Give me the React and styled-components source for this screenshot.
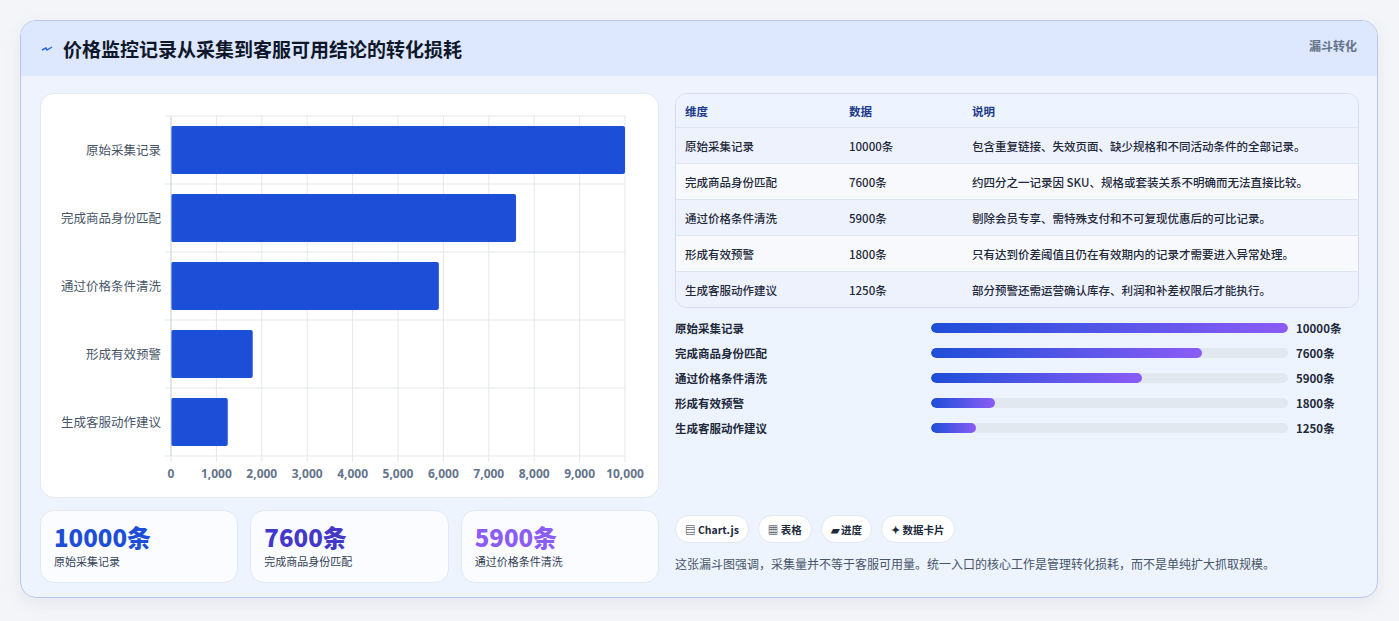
import React from "react";
import styled, { createGlobalStyle } from "styled-components";

const G = createGlobalStyle`
  html,body{margin:0;background:#f4f5f8;}
  body{font-family:"Noto Sans CJK SC","Noto Sans",sans-serif;}
`;
const Page = styled.div`padding:20px 21px 22px 20px;`;
const Card = styled.div`
  border:1px solid #b9c6ee;border-radius:16px;overflow:hidden;
  background:linear-gradient(180deg,#eef3fe,#edf4fe);
  box-shadow:0 6px 18px rgba(60,80,140,.08);height:578px;box-sizing:border-box;
`;
const Header = styled.div`
  height:55px;background:#dde7fd;display:flex;align-items:center;justify-content:space-between;
  padding:0 20px 0 20px;box-sizing:border-box;
`;
const Title = styled.h1`margin:0;font-size:19px;font-weight:700;color:#0f172a;display:flex;align-items:center;gap:10px;`;
const Tag = styled.span`font-size:12px;font-weight:700;color:#64748b;align-self:flex-start;margin-top:16px;`;
const Body = styled.div`display:grid;grid-template-columns:619px 684px;gap:16px;padding:17px 19px 0 19px;`;
const Left = styled.div`display:flex;flex-direction:column;gap:12px;`;
const ChartBox = styled.div`background:#fff;border:1px solid #e3e8f3;border-radius:14px;height:403px;`;
const Stats = styled.div`display:grid;grid-template-columns:repeat(3,1fr);gap:12px;`;
const Stat = styled.div`background:#fbfcff;border:1px solid #e3e8f3;border-radius:14px;height:73px;box-sizing:border-box;padding:10px 13px;`;
const StatNum = styled.div`font-size:24px;font-weight:800;color:${p=>p.c};line-height:32px;`;
const StatLbl = styled.div`font-size:11px;color:#334155;`;
const Right = styled.div`display:flex;flex-direction:column;height:490px;`;
const Table = styled.div`border:1px solid #d5dcee;border-radius:12px;overflow:hidden;`;
const Row = styled.div`
  display:grid;grid-template-columns:164px 123px 1fr;height:${p=>p.h?33:35}px;align-items:center;
  padding-left:9px;font-size:11.5px;color:${p=>p.h?"#1e3a8a":"#1e293b"};font-weight:${p=>p.h?700:500};
  background:${p=>p.h?"#eef4ff":p.alt?"#f7f9fd":"#eef2fc"};border-top:${p=>p.h?"none":"1px solid #dfe5f2"};
`;
const Bars = styled.div`display:flex;flex-direction:column;margin-top:8px;`;
const BarRow = styled.div`display:grid;grid-template-columns:256px 357px 1fr;align-items:center;height:24.8px;font-size:11.5px;font-weight:700;color:#1e293b;`;
const Track = styled.div`height:10px;border-radius:5px;background:#e2e8f0;overflow:hidden;`;
const Fill = styled.div`height:100%;border-radius:5px;background:linear-gradient(90deg,#1d4ed8,#8b5cf6);`;
const Val = styled.span`padding-left:8px;font-size:11.5px;`;
const Chips = styled.div`display:flex;gap:9px;margin-top:auto;`;
const Chip = styled.span`background:#fff;border:1px solid #e2e8f0;border-radius:14px;height:26px;padding:0 9px;display:flex;align-items:center;font-size:10.5px;font-weight:700;color:#1e293b;gap:3px;`;
const Note = styled.p`margin:12px 0 11px;font-size:12px;color:#475569;`;

const data = [
  ["原始采集记录",10000,"包含重复链接、失效页面、缺少规格和不同活动条件的全部记录。"],
  ["完成商品身份匹配",7600,"约四分之一记录因 SKU、规格或套装关系不明确而无法直接比较。"],
  ["通过价格条件清洗",5900,"剔除会员专享、需特殊支付和不可复现优惠后的可比记录。"],
  ["形成有效预警",1800,"只有达到价差阈值且仍在有效期内的记录才需要进入异常处理。"],
  ["生成客服动作建议",1250,"部分预警还需运营确认库存、利润和补差权限后才能执行。"],
];

function Chart(){
  const x0=130,x1=584,y0=22,step=68;
  const sx=v=>x0+(x1-x0)*v/10000;
  return (
    <svg width="619" height="403" style={{display:"block"}}>
      {Array.from({length:11}).map((_,i)=>{const x=sx(i*1000);return <g key={i}>
        <line x1={x} x2={x} y1={y0} y2={y0+340} stroke="#e5e7eb"/>
        <line x1={x} x2={x} y1={y0+340} y2={y0+346} stroke="#e5e7eb"/>
        <text x={x} y={384} fontSize="12" fontWeight="700" fill="#64748b" textAnchor="middle" fontFamily="Noto Sans,sans-serif">{i===0?"0":(i*1000).toLocaleString("en-US")}</text></g>})}
      {data.map((d,i)=><g key={i}>
        <line x1={x0-6} x2={x1} y1={y0+step*(i+1)} y2={y0+step*(i+1)} stroke="#e5e7eb"/>
        <rect x={x0} y={y0+step*i+10} width={sx(d[1])-x0} height={48} rx="2" fill="#1d4ed8"/>
        <text x={x0-10} y={y0+step*i+39} fontSize="12.5" fill="#475569" textAnchor="end" fontFamily="Noto Sans CJK SC,sans-serif">{d[0]}</text>
      </g>)}
      <line x1={x0} x2={x0} y1={y0} y2={y0+340} stroke="#d1d5db"/>
      <line x1={x0-6} x2={x1} y1={y0} y2={y0} stroke="#e5e7eb"/>
    </svg>
  );
}

export default function App(){
  return <Page><G/><Card>
    <Header>
      <Title><svg width="12" height="10" viewBox="0 0 12 10"><path d="M1 6 L5 4 L6 6 L11 3" stroke="#2563eb" strokeWidth="1.4" fill="none"/></svg>价格监控记录从采集到客服可用结论的转化损耗</Title>
      <Tag>漏斗转化</Tag>
    </Header>
    <Body>
      <Left>
        <ChartBox><Chart/></ChartBox>
        <Stats>
          <Stat><StatNum c="#1d4ed8">10000条</StatNum><StatLbl>原始采集记录</StatLbl></Stat>
          <Stat><StatNum c="#4338ca">7600条</StatNum><StatLbl>完成商品身份匹配</StatLbl></Stat>
          <Stat><StatNum c="#8b5cf6">5900条</StatNum><StatLbl>通过价格条件清洗</StatLbl></Stat>
        </Stats>
      </Left>
      <Right>
        <Table>
          <Row h><span>维度</span><span>数据</span><span>说明</span></Row>
          {data.map((d,i)=><Row key={i} alt={i%2===1}><span>{d[0]}</span><span>{d[1]}条</span><span>{d[2]}</span></Row>)}
        </Table>
        <Bars>
          {data.map((d,i)=><BarRow key={i}><span>{d[0]}</span><Track><Fill style={{width:d[1]/100+"%"}}/></Track><Val>{d[1]}条</Val></BarRow>)}
        </Bars>
        <Chips><Chip>▤ Chart.js</Chip><Chip>▦ 表格</Chip><Chip>▰ 进度</Chip><Chip>✦ 数据卡片</Chip></Chips>
        <Note>这张漏斗图强调，采集量并不等于客服可用量。统一入口的核心工作是管理转化损耗，而不是单纯扩大抓取规模。</Note>
      </Right>
    </Body>
  </Card></Page>;
}
